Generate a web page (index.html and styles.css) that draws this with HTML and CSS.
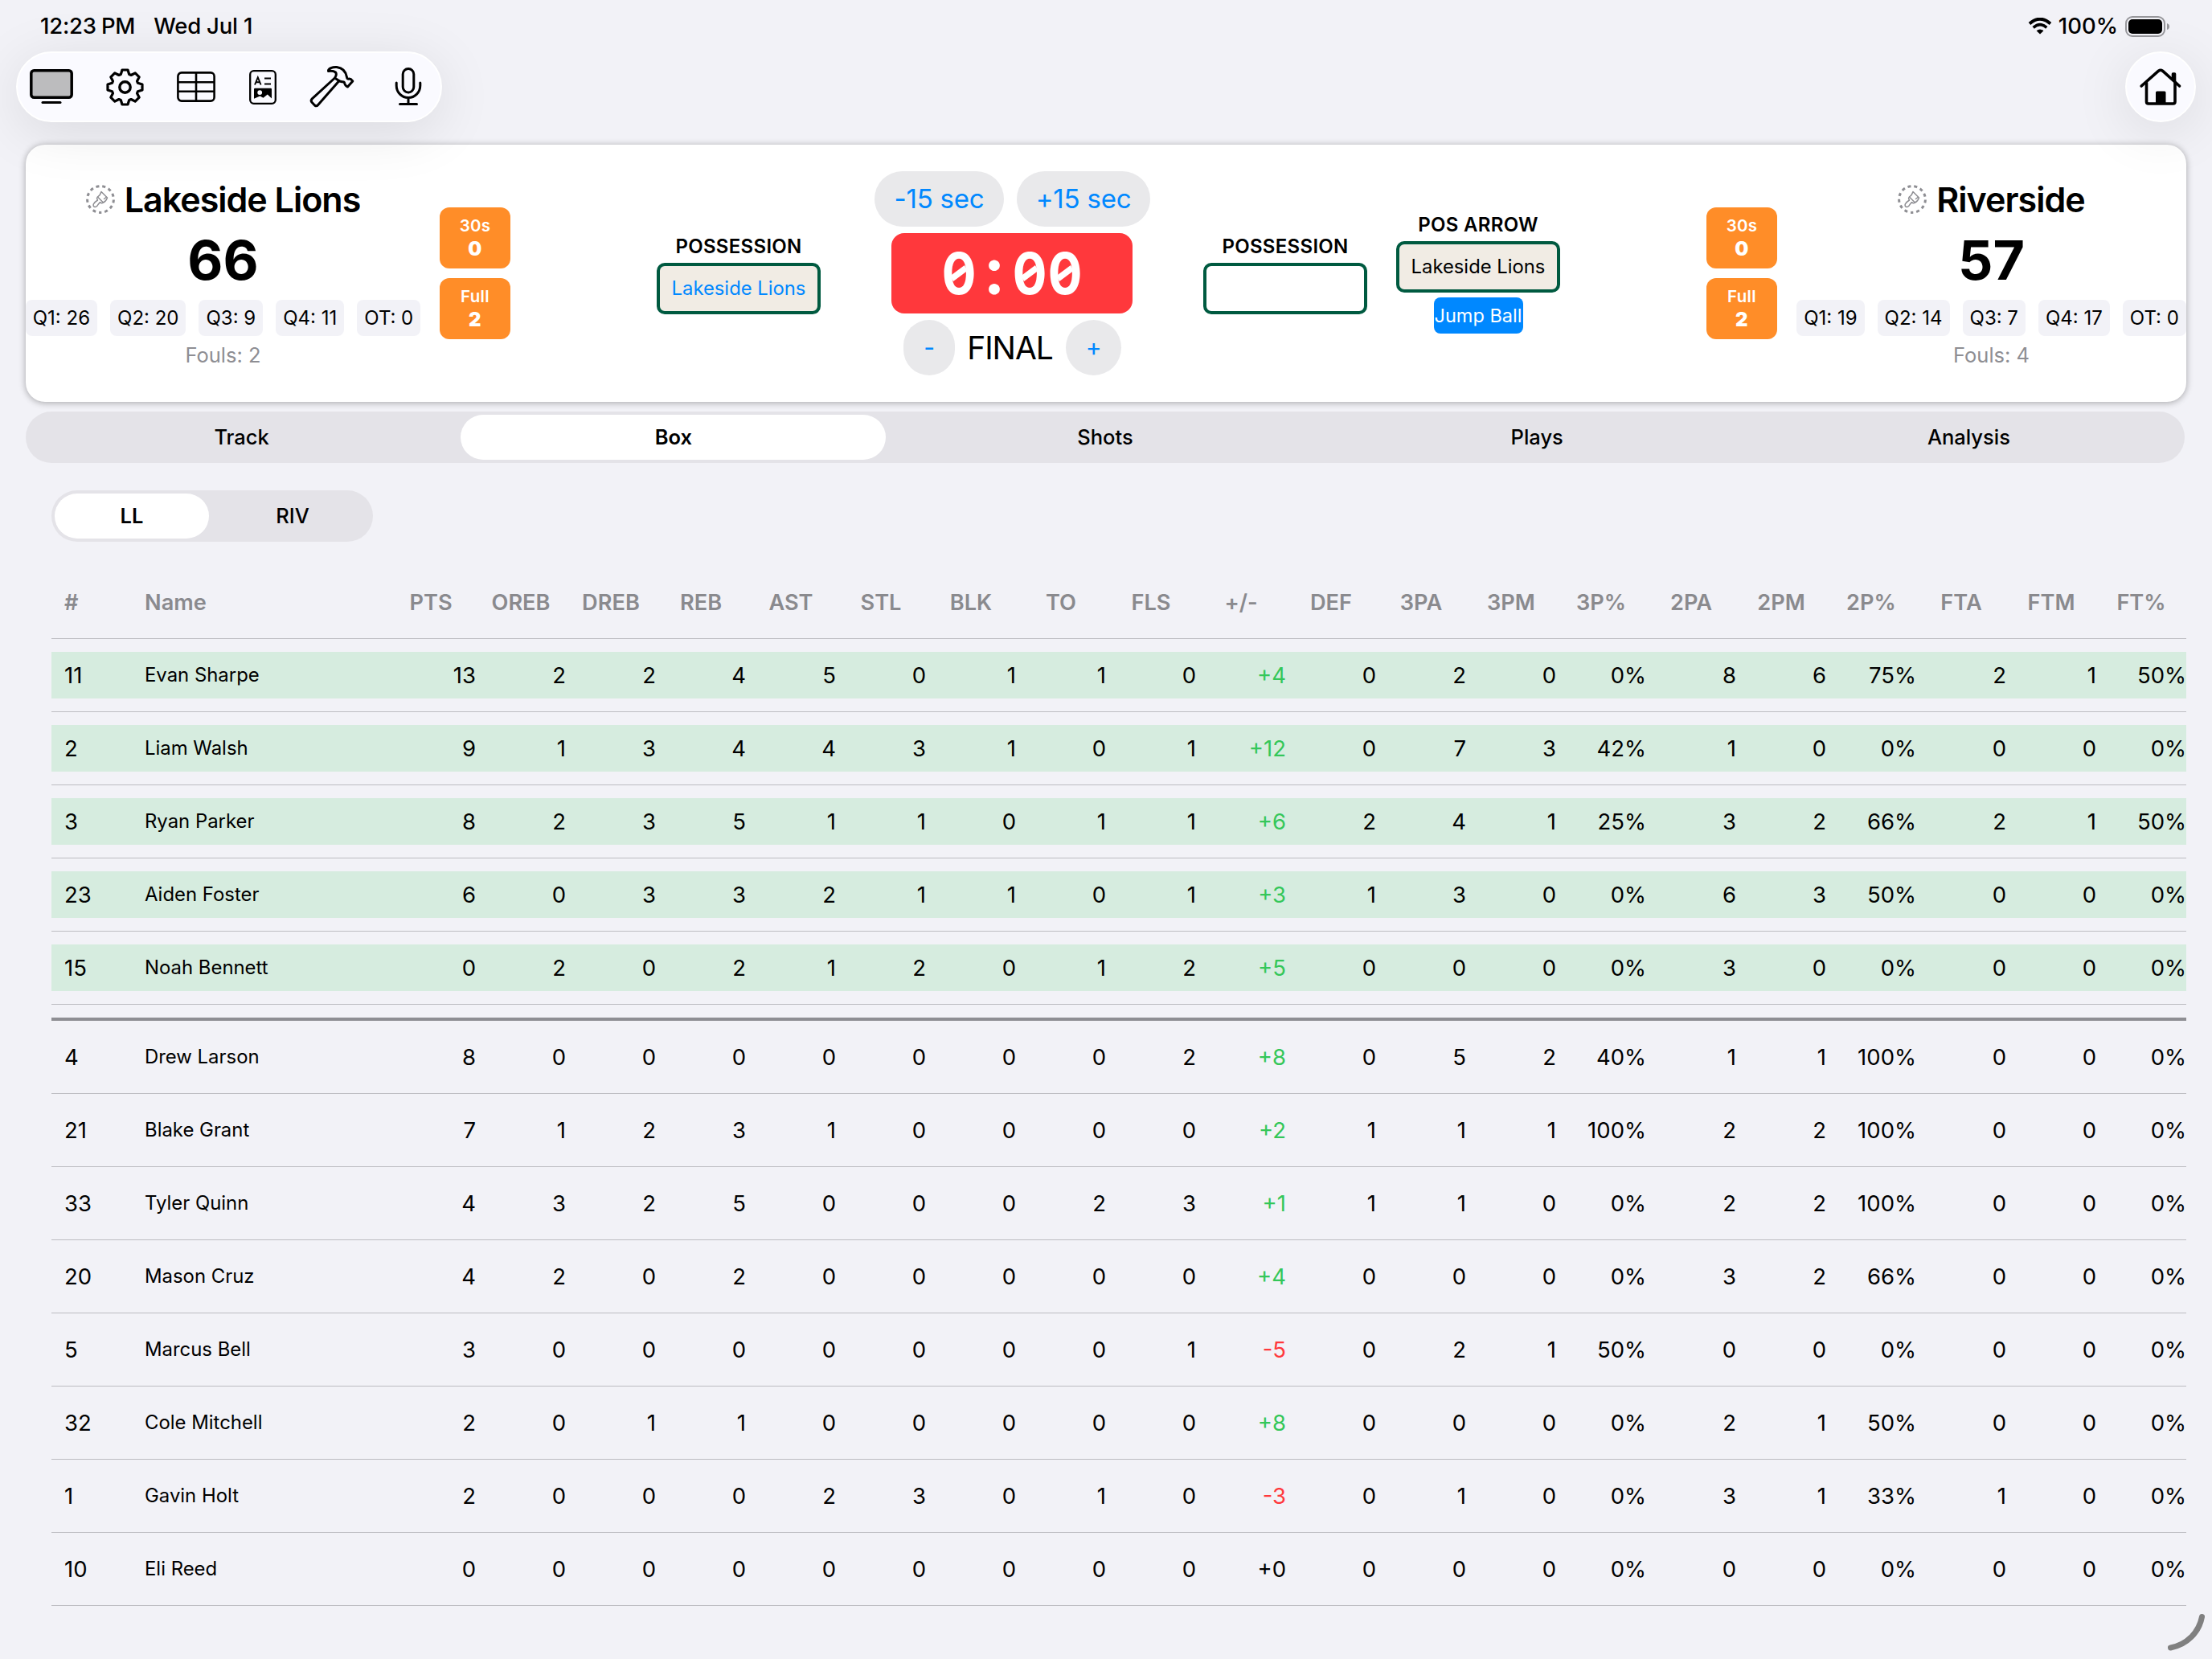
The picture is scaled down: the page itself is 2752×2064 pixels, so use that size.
FILE: index.html
```html
<!DOCTYPE html>
<html lang="en">
<head>
<meta charset="utf-8">
<title>Box Score</title>
<link rel="stylesheet" href="styles.css">
</head>
<body>
<svg class="defs" width="0" height="0" aria-hidden="true">
  <symbol id="brush" viewBox="0 0 36 36">
    <circle cx="18" cy="18" r="16.4" transform="rotate(90 18 18)" fill="none" stroke="#8e8e93" stroke-width="3" stroke-dasharray="4 3.926" stroke-dashoffset="2"/>
    <g fill="none" stroke="#8e8e93" stroke-width="1.5" stroke-linejoin="round" stroke-linecap="round">
      <path d="M19 8.500 L26.500 16 Q25 20.500 21.500 22 L14.500 15 Q18 12.500 19 8.500Z"/>
      <path d="M14.500 15 Q13 16.500 14 18 L14.500 19 Q10.500 21.500 9.300 24 Q8.600 27 11 27.500 Q13.500 27.600 15 24.500 L17.300 21.700 Q19.500 23.500 21.500 22"/>
      <path d="M22.500 17.500 L25 15.500"/>
    </g>
  </symbol>
</svg>

<header class="status">
  <div class="status-left"><span class="time">12:23<i class="thin"></i>PM</span><span class="date">Wed Jul 1</span></div>
  <div class="status-right">
    <svg class="wifi" viewBox="0 0 30 21"><path d="M2 7.500 Q15-4.200 28 7.500" fill="none" stroke="#000" stroke-width="3.800"/><path d="M6.700 12.400 Q15 5 23.300 12.400" fill="none" stroke="#000" stroke-width="3.600"/><path d="M10.600 16.300 Q15 12.600 19.400 16.300 L15 20.600Z"/></svg>
    <span class="percent">100%</span>
    <svg class="battery" viewBox="0 0 56 26"><rect x="1" y="1" width="48" height="24" rx="8" fill="none" stroke="#97979b" stroke-width="2"/><rect x="4" y="4" width="42" height="18" rx="5"/><path d="M52 9 Q55 10 55 13 Q55 16 52 17Z" fill="#97979b"/></svg>
  </div>
</header>

<nav class="toolbar">
  <div class="tools">
    <svg class="ic monitor" viewBox="0 0 54 44"><rect x="1.800" y="1.800" width="50.400" height="33.400" rx="3.500" fill="#bcbcbe" stroke="#000" stroke-width="3.500"/><path d="M16 41.500H38" stroke="#000" stroke-width="3" stroke-linecap="round"/></svg>
    <svg class="ic gear" viewBox="-23.500 -23.500 47 47"><path d="M-5.200-16L-3.500-21.500H3.500L5.200-16L7.600-15L12.700-17.700L17.700-12.700L15-7.600L16-5.200L21.500-3.500V3.500L16 5.200L15 7.600L17.700 12.700L12.700 17.700L7.600 15L5.200 16L3.500 21.500H-3.500L-5.200 16L-7.600 15L-12.700 17.700L-17.700 12.700L-15 7.600L-16 5.200L-21.500 3.500V-3.500L-16-5.200L-15-7.600L-17.700-12.700L-12.700-17.700L-7.600-15Z" fill="none" stroke="#000" stroke-width="3.200" stroke-linejoin="round"/><circle r="6.700" fill="none" stroke="#000" stroke-width="3.400"/></svg>
    <svg class="ic sheet" viewBox="0 0 48 38"><g fill="none" stroke="#000" stroke-width="2.600"><rect x="1.400" y="1.400" width="45.200" height="35.200" rx="4.500"/><path d="M1.400 13.200H46.600M1.400 24.700H46.600M24 1.400V36.600"/></g></svg>
    <svg class="ic doc" viewBox="0 0 34 43"><rect x="1.200" y="1.200" width="31.600" height="40.600" rx="4.500" fill="none" stroke="#000" stroke-width="2.300"/><path d="M7 18.500L10.800 9.200L14.600 18.500M8.300 15.300H13.300M19 10.500H27M19 17.500H27" fill="none" stroke="#000" stroke-width="1.900"/><path fill-rule="evenodd" d="M6 24Q6 22.800 7.200 22.800H26.800Q28 22.800 28 24V35.500L22.800 30.500L17.500 34.800L13.500 32.500L6 35.800ZM13.200 25.200A2.900 2.900 0 1 0 13.200 31A2.900 2.900 0 1 0 13.200 25.200Z"/></svg>
    <svg class="ic hammer" viewBox="0 0 60 56"><g fill="none" stroke="#000" stroke-width="3" stroke-linejoin="round" stroke-linecap="round"><path d="M33 17.500L5 43.200Q3.300 45.300 5 47.300L8.500 51Q10.800 52.800 12.700 50.500L39 20.500"/><path d="M25.500 8.500C25 5.500 31 3 36 3.500C44 4.500 47.500 10 48.500 16Q48.800 18.500 51 18.200Q53 17.500 55.800 21L49.500 28Q46.500 27 45.800 23.800Q45.500 21.500 42.500 21.800L39.500 21L33.500 17Q36.500 12.500 34.500 10Q31.500 7.500 25.500 8.500Z"/></g></svg>
    <svg class="ic mic" viewBox="0 0 34 48"><g fill="none" stroke="#000" stroke-width="3" stroke-linecap="round"><rect x="10.200" y="1.500" width="13.600" height="29.500" rx="6.800"/><path d="M2.200 19V22.500A14.800 15 0 0 0 31.800 22.500V19M17 37.500V45.500M6.500 45.500H27.500"/></g></svg>
  </div>
  <div class="home">
    <svg viewBox="0 0 52 47"><g fill="none" stroke="#000" stroke-width="3.600" stroke-linecap="round" stroke-linejoin="round"><path d="M2.200 22L23.500 3.200Q26 1.300 28.500 3.200L49.500 22"/><path d="M8.500 18V41.500Q8.500 44 11 44H41.500Q44 44 44 41.500V18"/></g><path d="M20 44V30Q20 28.500 21.500 28.500H31Q32.500 28.500 32.500 30V44ZM39.700 13V7Q39.700 5.300 41.400 5.300H43.600Q45.300 5.300 45.300 7V18Z"/></svg>
  </div>
</nav>

<main>
  <section class="card">
    <div class="team team-left">
      <div class="team-name"><svg class="brush"><use href="#brush"/></svg><span>Lakeside Lions</span></div>
      <div class="score">66</div>
      <div class="chips"><span>Q1: 26</span><span>Q2: 20</span><span>Q3: 9</span><span>Q4: 11</span><span>OT: 0</span></div>
      <div class="fouls">Fouls: 2</div>
    </div>
    <div class="timeouts">
      <div class="to"><span>30s</span><b>0</b></div>
      <div class="to"><span>Full</span><b>2</b></div>
    </div>
    <div class="center">
      <div class="poss">
        <div class="label">POSSESSION</div>
        <div class="box filled blue">Lakeside Lions</div>
      </div>
      <div class="clock">
        <div class="row"><span class="pill">-15 sec</span><span class="pill">+15 sec</span></div>
        <div class="time-box"><span class="zero">0</span><span class="colon">:</span><span class="zero">0</span><span class="zero">0</span></div>
        <div class="row"><span class="pill minus">-</span><span class="period">FINAL</span><span class="pill plus">+</span></div>
      </div>
      <div class="poss">
        <div class="label">POSSESSION</div>
        <div class="box"></div>
      </div>
      <div class="poss arrow">
        <div class="label">POS ARROW</div>
        <div class="box filled">Lakeside Lions</div>
        <div class="jump">Jump Ball</div>
      </div>
    </div>
    <div class="timeouts">
      <div class="to"><span>30s</span><b>0</b></div>
      <div class="to"><span>Full</span><b>2</b></div>
    </div>
    <div class="team team-right">
      <div class="team-name"><svg class="brush"><use href="#brush"/></svg><span>Riverside</span></div>
      <div class="score">57</div>
      <div class="chips"><span>Q1: 19</span><span>Q2: 14</span><span>Q3: 7</span><span>Q4: 17</span><span>OT: 0</span></div>
      <div class="fouls">Fouls: 4</div>
    </div>
  </section>

  <div class="segments tabs"><span>Track</span><span class="on">Box</span><span>Shots</span><span>Plays</span><span>Analysis</span></div>
  <div class="segments teams"><span class="on">LL</span><span>RIV</span></div>

  <table class="stats">
    <colgroup><col class="c-num"><col class="c-name"><col span="20" class="c-stat"></colgroup>
    <thead>
      <tr><th>#<th>Name<th>PTS<th>OREB<th>DREB<th>REB<th>AST<th>STL<th>BLK<th>TO<th>FLS<th>+/-<th>DEF<th>3PA<th>3PM<th>3P%<th>2PA<th>2PM<th>2P%<th>FTA<th>FTM<th>FT%</tr>
    </thead>
    <tbody class="court">
      <tr><td>11<td>Evan Sharpe<td>13<td>2<td>2<td>4<td>5<td>0<td>1<td>1<td>0<td class="up">+4<td>0<td>2<td>0<td>0%<td>8<td>6<td>75%<td>2<td>1<td>50%</tr>
      <tr><td>2<td>Liam Walsh<td>9<td>1<td>3<td>4<td>4<td>3<td>1<td>0<td>1<td class="up">+12<td>0<td>7<td>3<td>42%<td>1<td>0<td>0%<td>0<td>0<td>0%</tr>
      <tr><td>3<td>Ryan Parker<td>8<td>2<td>3<td>5<td>1<td>1<td>0<td>1<td>1<td class="up">+6<td>2<td>4<td>1<td>25%<td>3<td>2<td>66%<td>2<td>1<td>50%</tr>
      <tr><td>23<td>Aiden Foster<td>6<td>0<td>3<td>3<td>2<td>1<td>1<td>0<td>1<td class="up">+3<td>1<td>3<td>0<td>0%<td>6<td>3<td>50%<td>0<td>0<td>0%</tr>
      <tr><td>15<td>Noah Bennett<td>0<td>2<td>0<td>2<td>1<td>2<td>0<td>1<td>2<td class="up">+5<td>0<td>0<td>0<td>0%<td>3<td>0<td>0%<td>0<td>0<td>0%</tr>
    </tbody>
    <tbody class="bench">
      <tr class="divider"><td colspan="22"></tr>
      <tr><td>4<td>Drew Larson<td>8<td>0<td>0<td>0<td>0<td>0<td>0<td>0<td>2<td class="up">+8<td>0<td>5<td>2<td>40%<td>1<td>1<td>100%<td>0<td>0<td>0%</tr>
      <tr><td>21<td>Blake Grant<td>7<td>1<td>2<td>3<td>1<td>0<td>0<td>0<td>0<td class="up">+2<td>1<td>1<td>1<td>100%<td>2<td>2<td>100%<td>0<td>0<td>0%</tr>
      <tr><td>33<td>Tyler Quinn<td>4<td>3<td>2<td>5<td>0<td>0<td>0<td>2<td>3<td class="up">+1<td>1<td>1<td>0<td>0%<td>2<td>2<td>100%<td>0<td>0<td>0%</tr>
      <tr><td>20<td>Mason Cruz<td>4<td>2<td>0<td>2<td>0<td>0<td>0<td>0<td>0<td class="up">+4<td>0<td>0<td>0<td>0%<td>3<td>2<td>66%<td>0<td>0<td>0%</tr>
      <tr><td>5<td>Marcus Bell<td>3<td>0<td>0<td>0<td>0<td>0<td>0<td>0<td>1<td class="down">-5<td>0<td>2<td>1<td>50%<td>0<td>0<td>0%<td>0<td>0<td>0%</tr>
      <tr><td>32<td>Cole Mitchell<td>2<td>0<td>1<td>1<td>0<td>0<td>0<td>0<td>0<td class="up">+8<td>0<td>0<td>0<td>0%<td>2<td>1<td>50%<td>0<td>0<td>0%</tr>
      <tr><td>1<td>Gavin Holt<td>2<td>0<td>0<td>0<td>2<td>3<td>0<td>1<td>0<td class="down">-3<td>0<td>1<td>0<td>0%<td>3<td>1<td>33%<td>1<td>0<td>0%</tr>
      <tr><td>10<td>Eli Reed<td>0<td>0<td>0<td>0<td>0<td>0<td>0<td>0<td>0<td>+0<td>0<td>0<td>0<td>0%<td>0<td>0<td>0%<td>0<td>0<td>0%</tr>
    </tbody>
  </table>
</main>
<svg class="corner" viewBox="0 0 48 48"><path d="M43.500 4.500A48 48 0 0 1 4.500 43" fill="none" stroke="#808080" stroke-width="7" stroke-linecap="round"/></svg>
</body>
</html>
```
FILE: styles.css
```css
* { box-sizing: border-box; }
html, body { margin: 0; height: 2064px; overflow: hidden; }
body {
  background: #f2f2f7;
  color: #000;
  font-family: Inter, "Liberation Sans", sans-serif;
  font-size: 27px;
  line-height: 1.2;
  position: relative;
}
svg { display: block; flex: none; }
.defs { position: absolute; }

.status {
  height: 64px;
  display: flex;
  justify-content: space-between;
  align-items: center;
  padding: 1px 52px 0 50px;
  font-weight: 500;
  font-size: 27.500px;
}
.status-left { display: flex; gap: 23px; letter-spacing: -0.2px; }
.time { display: flex; }
.thin { width: 6px; }
.status-right { display: flex; align-items: center; }
.wifi { width: 30px; height: 21px; margin-right: 8px; }
.percent { margin-right: 9px; }
.battery { width: 56px; height: 26px; }

.toolbar {
  position: relative;
  z-index: 1;
  display: flex;
  justify-content: space-between;
  padding: 0 20px;
  height: 88px;
}
.tools, .home {
  background: #fafaff;
  border: 2px solid #fff;
  border-radius: 44px;
  box-shadow: 0 12px 70px rgba(0, 0, 0, 0.1);
  display: flex;
  align-items: center;
}
.tools { width: 530px; padding-left: 15px; }
.home { width: 88px; justify-content: center; }
.home svg { width: 52px; height: 47px; }
.monitor { width: 54px; height: 44px; margin-right: 41px; }
.gear { width: 47px; height: 47px; margin-right: 41px; }
.sheet { width: 48px; height: 38px; margin-right: 42px; }
.doc { width: 34px; height: 43px; margin-right: 39px; }
.hammer { width: 60px; height: 56px; margin-right: 48px; }
.mic { width: 34px; height: 48px; }

main { padding: 28px 32px 0; }

.card {
  height: 320px;
  background: #fff;
  border-radius: 24px;
  box-shadow: 0 1px 8px rgba(0, 0, 0, 0.33);
  display: flex;
  align-items: center;
}
.team { display: flex; flex-direction: column; align-items: center; }
.team-left { width: 491px; margin-right: 24px; }
.team-right { width: 485px; margin-left: 24px; }
.team-name {
  height: 52px;
  display: flex;
  align-items: center;
  gap: 12px;
  font-size: 43px;
  font-weight: 600;
  letter-spacing: -1px;
}
.team-name span { padding-top: 2px; }
.brush { width: 36px; height: 36px; }
.score {
  margin-top: 8px;
  height: 82px;
  line-height: 82px;
  font-size: 68px;
  font-weight: 700;
}
.chips { margin-top: 9px; display: flex; gap: 16px; }
.chips span {
  height: 45px;
  line-height: 45px;
  padding: 0 9px;
  background: #f2f2f7;
  border-radius: 8px;
  font-size: 24px;
  white-space: nowrap;
}
.fouls {
  margin-top: 8px;
  height: 32px;
  line-height: 32px;
  font-size: 25.500px;
  color: #8e8e93;
}

.timeouts { display: flex; flex-direction: column; gap: 12px; }
.to {
  width: 88px;
  height: 76px;
  border-radius: 12px;
  background: #ff8d28;
  color: #fff;
  display: flex;
  flex-direction: column;
  align-items: center;
  padding-top: 9px;
  font-size: 20.500px;
  font-weight: 600;
  line-height: 28px;
  letter-spacing: 0.3px;
}
.to b { font-size: 24px; font-weight: 900; line-height: 30px; }

.center { flex: 1; display: flex; justify-content: center; align-items: center; }
.poss { width: 204px; padding-top: 3px; text-align: center; }
.label {
  height: 29px;
  line-height: 29px;
  font-size: 24px;
  font-weight: 600;
  letter-spacing: 0.3px;
  white-space: nowrap;
}
.box {
  margin-top: 6px;
  height: 64px;
  line-height: 56px;
  border: 4px solid #005a40;
  border-radius: 10px;
  font-size: 23.800px;
  white-space: nowrap;
}
.filled { background: #f1ece4; }
.blue { color: #08f; }
.arrow { margin-left: 36px; padding-top: 0; }
.jump {
  margin: 6px auto 0;
  width: 111px;
  height: 45px;
  line-height: 45px;
  border-radius: 8px;
  background: #08f;
  color: #fff;
  font-size: 23.500px;
  white-space: nowrap;
}
.clock {
  margin: 0 66px 0 67px;
  width: 343px;
  display: flex;
  flex-direction: column;
  align-items: center;
  gap: 8px;
}
.row { display: flex; gap: 16px; height: 69px; align-items: center; }
.pill {
  width: 161px;
  height: 69px;
  line-height: 69px;
  border-radius: 35px;
  background: #e9e9eb;
  color: #08f;
  font-size: 33px;
  text-align: center;
  letter-spacing: -0.2px;
  white-space: nowrap;
}
.pill + .pill { width: 166px; }
.row .minus { width: 64px; font-size: 30px; }
.row .plus { width: 69px; font-size: 30px; }
.period { width: 107px; padding-top: 1px; margin-left: -1px; text-align: center; font-size: 39px; letter-spacing: -1.100px; }
.time-box {
  width: 300px;
  height: 100px;
  margin-right: 1px;
  border-radius: 16px;
  background: #ff383c;
  color: #fff;
  display: flex;
  justify-content: center;
  font-size: 72px;
  font-weight: 700;
  line-height: 100px;
}
.time-box span {
  width: 44px;
  display: flex;
  justify-content: center;
}
.zero { position: relative; transform: scaleX(0.88); }
.zero::after {
  content: "";
  position: absolute;
  left: 10px;
  top: 46px;
  width: 24px;
  height: 8px;
  background: #fff;
  transform: rotate(-33deg);
}
.time-box .colon {
  font-family: Lato, sans-serif;
  font-weight: 900;
  font-size: 84px;
  transform: translateY(-6px);
}

.segments {
  height: 64px;
  background: #e4e3e8;
  border-radius: 32px;
  display: flex;
  font-size: 25.500px;
  font-weight: 500;
}
.segments span {
  flex: 1;
  margin: 4px;
  height: 56px;
  line-height: 56px;
  border-radius: 28px;
  text-align: center;
}
.segments .on { background: #fff; font-weight: 600; }
.tabs { margin: 12px 2px 0 0; }
.teams { margin: 34px 0 0 32px; width: 400px; }

.stats {
  margin: 28px 0 0 32px;
  width: 2656px;
  table-layout: fixed;
  border-collapse: separate;
  border-spacing: 0;
}
.c-num { width: 100px; }
.c-name { width: 316px; }
.c-stat { width: 112px; }
.stats th, .stats td {
  padding: 1px 0 0;
  height: 91px;
  border-bottom: 1px solid #bcbcc1;
  text-align: right;
  font-weight: 400;
  font-size: 27.500px;
  white-space: nowrap;
}
.stats th {
  height: 93px;
  padding-top: 4px;
  color: #8a8a8e;
  font-size: 27.200px;
  font-weight: 600;
  text-align: center;
}
.stats td:first-child, .stats th:first-child { text-align: left; padding-left: 16px; }
.stats td:nth-child(2), .stats th:nth-child(2) { text-align: left; padding-left: 16px; }
.stats td:nth-child(2) { font-size: 23.900px; }
.court tr {
  background: linear-gradient(#d6ecdf, #d6ecdf) 0 16px / 100% 58px no-repeat;
}
.stats .divider td {
  height: 20px;
  padding: 0;
  border-bottom: 4px solid #8e8e93;
}
.stats .up { color: #34c759; }
.stats .down { color: #ff383c; }

.corner { position: absolute; left: 2696px; top: 2007px; width: 48px; height: 48px; }
```
